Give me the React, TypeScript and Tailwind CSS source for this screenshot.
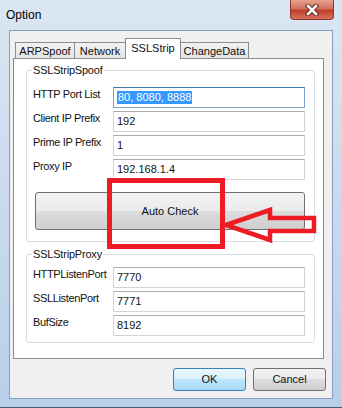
import React from "react";

const font = "font-['Liberation_Sans',Arial,sans-serif]";

const TextBox = ({ value, focused, selected }: { value: string; focused?: boolean; selected?: boolean }) => (
  <div
    className={`w-[192px] h-[21px] bg-white flex items-center pl-[3px] text-[11px] leading-[19px] text-[#111] border ${
      focused
        ? "border-[#7da2ce] border-t-[#3d7bad]"
        : "border-[#d0d4db] border-t-[#abadb3]"
    }`}
  >
    {selected ? <span className="bg-[#3399ff] text-white px-[1px] leading-[13px]">{value}</span> : value}
  </div>
);

const Row = ({ label, value, focused, selected }: { label: string; value: string; focused?: boolean; selected?: boolean }) => (
  <div className="flex h-[21px]">
    <div className="w-[80px] text-[11px] leading-[14px] tracking-[-0.35px] text-[#111]">{label}</div>
    <TextBox value={value} focused={focused} selected={selected} />
  </div>
);

const GroupBox = ({ title, children, className }: { title: string; children: React.ReactNode; className?: string }) => (
  <div className={`relative w-[289px] border border-[#d5dfe5] rounded-[3px] pl-[6px] ${className ?? ""}`}>
    <div className="absolute -top-[8px] left-[5px] bg-white px-[1px] text-[11px] leading-[14px] tracking-[-0.2px] text-[#111]">{title}</div>
    {children}
  </div>
);

const Tab = ({ label, active, width }: { label: string; active?: boolean; width: string }) =>
  active ? (
    <div
      className={`${width} h-[21px] -ml-[1px] z-10 bg-white border border-b-0 border-[#898c95] flex justify-center pt-[2px] text-[11px] leading-[14px] text-[#111]`}
    >
      {label}
    </div>
  ) : (
    <div
      className={`${width} h-[17px] -ml-[1px] bg-[linear-gradient(#f2f2f2,#e3e3e3)] border border-b-0 border-[#898c95] flex items-center justify-center text-[11px] leading-[14px] text-[#111]`}
    >
      {label}
    </div>
  );

const App = () => {
  return (
    <div
      className={`relative w-[342px] h-[408px] overflow-hidden flex flex-col ${font} bg-[linear-gradient(180deg,#dbe6f3_0%,#cddcee_40%,#b9cfe9_100%)] border-b border-[#4a5a70]`}
    >
      {/* title bar */}
      <div className="h-[30px] flex items-start shrink-0">
        <div className="ml-[6px] mt-[8px] text-[12px] leading-[14px] text-black">Option</div>
        <div className="ml-auto mr-[8px] w-[44px] h-[20px] rounded-b-[4px] border border-t-0 border-[#8d3a2e] bg-[linear-gradient(180deg,#e8a08e_0%,#d4705c_45%,#c0402a_55%,#d8705c_100%)] flex items-center justify-center">
          <svg width="14" height="12" viewBox="0 0 14 12">
            <path d="M3 2 L11 10 M11 2 L3 10" stroke="#5a2a22" strokeWidth="4.5" strokeLinecap="square" />
            <path d="M3 2 L11 10 M11 2 L3 10" stroke="#ffffff" strokeWidth="2.5" strokeLinecap="square" />
          </svg>
        </div>
      </div>

      {/* client area */}
      <div className="mx-[9px] h-[369px] bg-[#f0f0f0] border border-[#8a9fbd] flex flex-col">
        <div className="ml-[3px] mt-[7px] w-[311px] flex flex-col">
          <div className="h-[21px] flex items-end pl-[3px]">
            <Tab label="ARPSpoof" width="w-[60px]" />
            <Tab label="Network" width="w-[52px]" />
            <Tab label="SSLStrip" width="w-[56px]" active />
            <Tab label="ChangeData" width="w-[69px]" />
          </div>
          <div className="h-[301px] -mt-[1px] bg-white border border-[#898c95] pl-[12px] pt-[11px]">
            <GroupBox title="SSLStripSpoof" className="pt-[16px] pb-[11px]">
              <div className="flex flex-col gap-[3px]">
                <Row label="HTTP Port List" value="80, 8080, 8888" focused selected />
                <Row label="Client IP Prefix" value="192" />
                <Row label="Prime IP Prefix" value="1" />
                <Row label="Proxy IP" value="192.168.1.4" />
              </div>
              <div className="mt-[12px] ml-[2px] w-[270px] h-[38px] rounded-[3px] border border-[#707070] bg-[linear-gradient(180deg,#f2f2f2_0%,#ebebeb_50%,#dddddd_50%,#cfcfcf_100%)] flex items-center justify-center text-[11px] text-[#111]">
                Auto Check
              </div>
            </GroupBox>
            <GroupBox title="SSLStripProxy" className="mt-[12px] pt-[12px] pb-[6px]">
              <div className="flex flex-col gap-[3px]">
                <Row label="HTTPListenPort" value="7770" />
                <Row label="SSLListenPort" value="7771" />
                <Row label="BufSize" value="8192" />
              </div>
            </GroupBox>
          </div>
        </div>

        <div className="mt-[9px] mr-[6px] flex justify-end gap-[7px]">
          <div className="w-[73px] h-[23px] rounded-[3px] border border-[#3c7fb1] bg-[linear-gradient(180deg,#eaf6fd_0%,#d9f0fc_50%,#bee6fd_50%,#a7d9f5_100%)] flex items-center justify-center text-[11px] text-[#111]">
            OK
          </div>
          <div className="w-[73px] h-[23px] rounded-[3px] border border-[#707070] bg-[linear-gradient(180deg,#f2f2f2_0%,#ebebeb_50%,#dddddd_50%,#cfcfcf_100%)] flex items-center justify-center text-[11px] text-[#111]">
            Cancel
          </div>
        </div>
      </div>

      {/* red annotation */}
      <div className="absolute left-[107px] top-[178px] w-[118px] h-[71px] border-[5px] border-[#ed1c24]" />
      <svg className="absolute left-0 top-0" width="342" height="408" viewBox="0 0 342 408">
        <polygon
          points="226,225 270,210 270,218 314,218 314,231 270,231 270,240"
          fill="none"
          stroke="#ed1c24"
          strokeWidth="4.5"
          strokeLinejoin="miter"
        />
      </svg>
    </div>
  );
};

export default App;
